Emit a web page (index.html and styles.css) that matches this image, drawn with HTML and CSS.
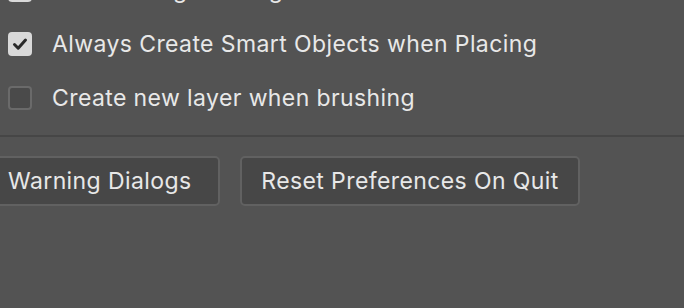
FILE: index.html
```html
<!DOCTYPE html>
<html>
<head>
<meta charset="utf-8">
<link rel="stylesheet" href="styles.css">
</head>
<body>
<div class="panel">
  <div class="options">
    <label class="row">
      <span class="box checked"><svg viewBox="0 0 24 24" width="24" height="24"><path d="M6.5 12.5 L10.2 16.2 L17.5 8" fill="none" stroke="#2a2a2a" stroke-width="3" stroke-linecap="round" stroke-linejoin="round"/></svg></span>
      <span class="label">Resize Image During Place</span>
    </label>
    <label class="row">
      <span class="box checked"><svg viewBox="0 0 24 24" width="24" height="24"><path d="M6.5 12.5 L10.2 16.2 L17.5 8" fill="none" stroke="#2a2a2a" stroke-width="3" stroke-linecap="round" stroke-linejoin="round"/></svg></span>
      <span class="label">Always Create Smart Objects when Placing</span>
    </label>
    <label class="row">
      <span class="box"></span>
      <span class="label">Create new layer when brushing</span>
    </label>
  </div>
  <div class="separator"></div>
  <div class="buttons">
    <button class="btn btn-warn">Warning Dialogs</button>
    <button class="btn btn-reset">Reset Preferences On Quit</button>
  </div>
</div>
</body>
</html>
```
FILE: styles.css
```css
html, body {
  margin: 0;
  padding: 0;
  background: #535353;
  width: 684px;
  height: 308px;
  overflow: hidden;
}
body {
  font-family: Inter, "Noto Sans", sans-serif;
  color: #e8e8e8;
}
.panel {
  display: flex;
  flex-direction: column;
}
.options {
  display: flex;
  flex-direction: column;
  margin-top: -37px;
}
.row {
  height: 54px;
  display: flex;
  align-items: center;
  padding-left: 8px;
  gap: 20px;
}
.box {
  width: 24px;
  height: 24px;
  box-sizing: border-box;
  border-radius: 4px;
  border: 2px solid #6a6a6a;
  background: #4a4a4a;
  display: flex;
  align-items: center;
  justify-content: center;
}
.box.checked {
  background: #d9d9d9;
  border-color: #d9d9d9;
}
.box svg {
  flex: none;
}
.label {
  font-size: 23px;
  letter-spacing: 0.4px;
  line-height: 1;
}
.separator {
  margin-top: 10px;
  height: 2px;
  background: #464646;
}
.buttons {
  display: flex;
  gap: 20px;
  margin-top: 19px;
  margin-left: -12px;
}
.btn {
  height: 50px;
  box-sizing: border-box;
  background: #474747;
  border: 2px solid #616161;
  border-radius: 5px;
  color: #e8e8e8;
  font-family: Inter, "Noto Sans", sans-serif;
  font-size: 23px;
  letter-spacing: 0.4px;
  padding: 0;
  display: flex;
  align-items: center;
  justify-content: center;
}
.btn-warn {
  width: 232px;
  justify-content: flex-start;
  padding-left: 18px;
}
.btn-reset {
  width: 340px;
}
```
